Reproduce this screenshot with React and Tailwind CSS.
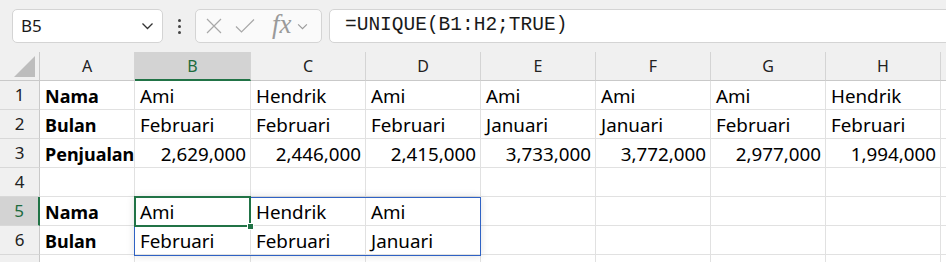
import React from "react";

const COLS = ["A", "B", "C", "D", "E", "F", "G", "H"];

const ROWS = [
  { n: 1, cells: ["Nama", "Ami", "Hendrik", "Ami", "Ami", "Ami", "Ami", "Hendrik"] },
  { n: 2, cells: ["Bulan", "Februari", "Februari", "Februari", "Januari", "Januari", "Februari", "Februari"] },
  { n: 3, num: true, cells: ["Penjualan", "2,629,000", "2,446,000", "2,415,000", "3,733,000", "3,772,000", "2,977,000", "1,994,000"] },
  { n: 4, cells: [] },
  { n: 5, cells: ["Nama", "Ami", "Hendrik", "Ami"] },
  { n: 6, cells: ["Bulan", "Februari", "Februari", "Januari"] },
  { n: 7, hideNum: true, cells: [] },
];

/* ── Chevron ─────────────────────────────────────── */
function Chevron({ className = "" }) {
  return (
    <svg viewBox="0 0 12 8" className={className} fill="none" stroke="currentColor" strokeWidth="1.3">
      <path d="M1 1.5 6 6.5 11 1.5" />
    </svg>
  );
}

/* ── FormulaBar ──────────────────────────────────── */
function FormulaBar() {
  return (
    <div className="h-[52px] bg-[#f0f0f0] flex items-center pl-[12px] gap-0">
      <div className="w-[151px] h-[34px] bg-white border border-[#d4d4d4] rounded-[5px] flex items-center justify-between pl-[8px] pr-[8px]">
        <span className="text-[17px] text-[#1a1a1a] font-['Noto_Sans',sans-serif]">B5</span>
        <Chevron className="w-[13px] h-[8px] text-[#333]" />
      </div>
      <div className="w-[32px] flex flex-col items-center gap-[3px]">
        <span className="w-[3px] h-[3px] bg-[#444] rounded-full" />
        <span className="w-[3px] h-[3px] bg-[#444] rounded-full" />
        <span className="w-[3px] h-[3px] bg-[#444] rounded-full" />
      </div>
      <div className="w-[127px] h-[34px] bg-[#fafafa] border border-[#d4d4d4] rounded-[5px] flex items-center pl-[9px]">
        <svg viewBox="0 0 18 18" className="w-[18px] h-[18px] text-[#a8a8a8]" fill="none" stroke="currentColor" strokeWidth="1.2">
          <path d="M2 2 16 16M16 2 2 16" />
        </svg>
        <svg viewBox="0 0 20 16" className="w-[20px] h-[16px] ml-[12px] text-[#a8a8a8]" fill="none" stroke="currentColor" strokeWidth="1.2">
          <path d="M1 8.5 6.5 14 19 1.5" />
        </svg>
        <span className="ml-[17px] italic text-[27px] leading-none text-[#9a9a9a] font-['Liberation_Serif',serif] -mt-[4px]">fx</span>
        <Chevron className="w-[11px] h-[7px] ml-[5px] text-[#9a9a9a]" />
      </div>
      <div className="ml-[7px] flex-1 -mr-[10px] h-[34px] bg-white border border-[#d4d4d4] rounded-[5px] flex items-center pl-[15px]">
        <span className="text-[19.5px] text-[#1a1a1a] font-['Liberation_Mono',monospace]">=UNIQUE(B1:H2;TRUE)</span>
      </div>
    </div>
  );
}

/* ── Grid ────────────────────────────────────────── */
function Grid() {
  const selCol = "B";
  const selRow = 5;
  return (
    <div className="relative">
      <div className="grid grid-cols-[40px_95px_116px_115px_115px_115px_115px_115px_115px_20px] grid-rows-[29px_29px_29px_29px_29px_29px_29px_29px]">
        {/* header row */}
        <div className="bg-[#f0f0f0] border-r border-b border-[#c9c9c9] relative">
          <svg viewBox="0 0 22 22" className="absolute right-[4px] bottom-[3px] w-[21px] h-[21px]">
            <path d="M22 0 22 22 0 22Z" fill="#bdbdbd" />
          </svg>
        </div>
        {COLS.map((c) => (
          <div
            key={c}
            className={`flex items-center justify-center text-[16px] font-['Noto_Sans',sans-serif] border-r border-[#d4d4d4] ${
              c === selCol
                ? "bg-[#d3d3d3] text-[#1d6b3e] border-b-2 border-b-[#217346]"
                : "bg-[#f0f0f0] text-[#222] border-b border-b-[#c9c9c9]"
            }`}
          >
            {c}
          </div>
        ))}
        <div className="bg-[#f0f0f0] border-b border-[#c9c9c9]" />

        {ROWS.map((r) => (
          <React.Fragment key={r.n}>
            <div
              className={`flex items-center justify-center text-[17px] font-['Noto_Sans',sans-serif] border-b border-[#d8d8d8] ${
                r.n === selRow
                  ? "bg-[#d3d3d3] text-[#1d6b3e] border-r-2 border-r-[#217346]"
                  : "bg-[#f0f0f0] text-[#222] border-r border-r-[#c9c9c9]"
              }`}
            >
              {r.hideNum ? "" : r.n}
            </div>
            {COLS.map((c, i) => {
              const v = r.cells[i] || "";
              const right = r.num && i > 0;
              return (
                <div
                  key={c}
                  className={`bg-white border-r border-b border-[#e1e1e1] flex items-center pt-[3px] overflow-visible whitespace-nowrap text-black font-['Noto_Sans',sans-serif] ${
                    right ? "justify-end pr-[4px]" : "pl-[5px]"
                  } ${i === 0 ? "font-bold text-[18px] pl-[4px]" : "text-[18.8px]"}`}
                >
                  {v}
                </div>
              );
            })}
            <div className="bg-white border-b border-[#e1e1e1]" />
          </React.Fragment>
        ))}
      </div>

      {/* spill range B5:D6 */}
      <div className="absolute left-[134px] top-[145px] w-[347px] h-[59px] border border-[#2f62c4] shadow-[0_0_8px_rgba(0,0,0,0.12)] pointer-events-none" />
      {/* active cell B5 */}
      <div className="absolute left-[134px] top-[144px] w-[117px] h-[31px] border-2 border-[#217346] pointer-events-none" />
      <div className="absolute left-[247px] top-[171px] w-[7px] h-[7px] bg-[#217346] border border-white pointer-events-none" />
    </div>
  );
}

export default function App() {
  return (
    <div className="w-[946px] h-[262px] overflow-hidden bg-white">
      <FormulaBar />
      <Grid />
    </div>
  );
}
